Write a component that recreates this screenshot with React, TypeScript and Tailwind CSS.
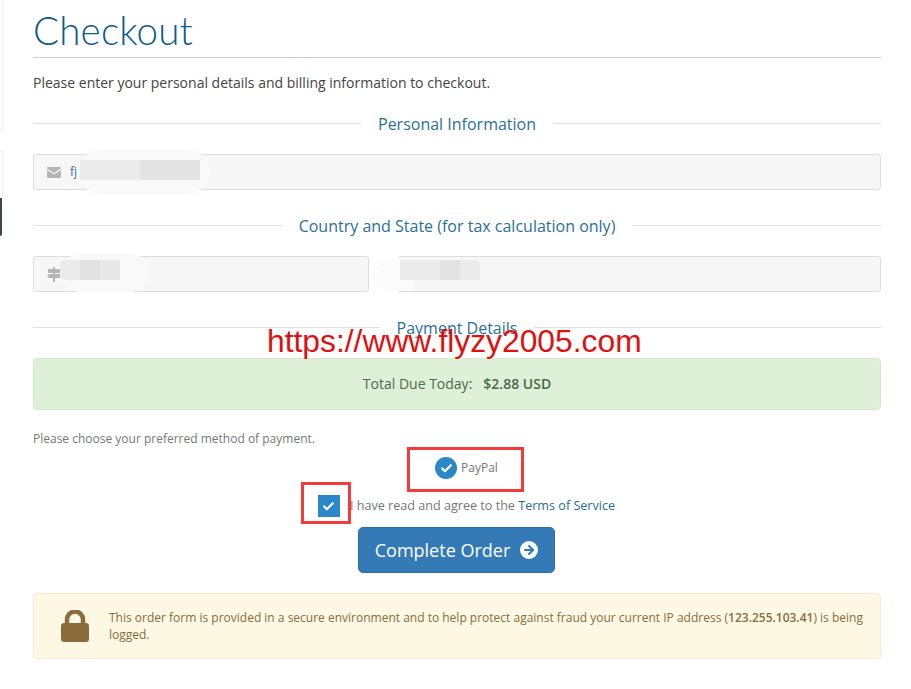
import { Check, ArrowRight } from "lucide-react";

function SubHeading({ title }: { title: string }) {
  return (
    <div className="flex h-5 items-center">
      <div className="mb-[2px] h-px flex-1 bg-[#e0e0e0]" />
      <h2 className="px-[17px] text-[16px] leading-5 text-[#2a6f97]">{title}</h2>
      <div className="mb-[2px] h-px flex-1 bg-[#e0e0e0]" />
    </div>
  );
}

function Field({ className, children }: { className: string; children?: React.ReactNode }) {
  return (
    <div className={`flex h-9 items-center rounded-[3px] border border-[#dddddd] bg-[#f7f7f7] pl-[13px] ${className}`}>
      {children}
    </div>
  );
}

function Patch({ className }: { className: string }) {
  return <div className={`absolute ${className}`} />;
}

function EnvelopeIcon() {
  return (
    <svg width="14" height="11" viewBox="0 0 14 11" className="shrink-0">
      <path d="M0 1.2C0 .5.5 0 1.2 0h11.6C13.5 0 14 .5 14 1.2v.3L7 6 0 1.5z" fill="#b5b5b5" />
      <path d="M0 3l7 4.5L14 3v6.8c0 .7-.5 1.2-1.2 1.2H1.2C.5 11 0 10.500 0 9.800z" fill="#b5b5b5" />
    </svg>
  );
}

function SignsIcon() {
  return (
    <svg width="14" height="15" viewBox="0 0 14 15" className="shrink-0">
      <path d="M6 0h2v15H6z" fill="#b5b5b5" />
      <path d="M1 2h11l2 2-2 2H1z" fill="#b5b5b5" />
      <path d="M2 7h11v4H2L0 9z" fill="#b5b5b5" />
    </svg>
  );
}

function PadlockIcon() {
  return (
    <svg width="28" height="32" viewBox="0 0 28 32" className="shrink-0">
      <path d="M6 14V9.500a8 8 0 0 1 16 0V14" fill="none" stroke="#8a6d3b" strokeWidth="4.500" />
      <rect x="0" y="13" width="28" height="19" rx="3" fill="#8a6d3b" />
    </svg>
  );
}

export default function App() {
  return (
    <div className="relative h-[689px] w-[911px] overflow-hidden bg-white font-['Open_Sans',sans-serif] text-[#58595b]">
      {/* sidebar edge from the page behind */}
      <Patch className="left-0 top-0 h-[131px] w-[3px] rounded-br-[3px] border-r border-b border-[#eeeeee]" />
      <Patch className="left-0 top-[151px] h-[47px] w-[3px] border-r border-t border-[#eeeeee]" />
      <Patch className="left-0 top-[198px] h-[38px] w-[2px] rounded-br-[2px] bg-[#3f4548]" />

      <main className="ml-[33px] w-[848px]">
        <h1 className="h-[58px] border-b border-[#cccccc] pt-[7px] font-['Lato',sans-serif] text-[38.500px] font-light leading-[46px] tracking-[0.2px] text-[#0d5c8c]">
          Checkout
        </h1>
        <p className="mt-[15px] text-[14px] leading-5 text-[#444444]">
          Please enter your personal details and billing information to checkout.
        </p>

        <div className="mt-[21px]">
          <SubHeading title="Personal Information" />
        </div>
        <Field className="mt-5 w-full">
          <EnvelopeIcon />
          <span className="ml-[9px] text-[12px] text-[#336fb5]">fj</span>
        </Field>

        <div className="mt-[26px]">
          <SubHeading title="Country and State (for tax calculation only)" />
        </div>
        <div className="mt-5 flex gap-[3px]">
          <Field className="w-[336px]">
            <SignsIcon />
          </Field>
          <Field className="flex-1" />
        </div>

        <div className="mt-[26px]">
          <SubHeading title="Payment Details" />
        </div>

        <div className="mt-5 flex h-[52px] items-center justify-center rounded-[4px] border border-[#d6e9c6] bg-[#dff0d8] pb-[2px] text-[14px] text-[#4a6b4a]">
          <span>Total Due Today:</span>
          <strong className="ml-[11px] font-semibold">$2.88 USD</strong>
        </div>

        <p className="mt-[21px] text-[12px] leading-4 text-[#777777]">
          Please choose your preferred method of payment.
        </p>

        <div className="mt-[10px] flex h-[22px] items-center justify-center gap-[4px] pl-[19px]">
          <span className="flex h-[22px] w-[22px] items-center justify-center rounded-full bg-[#2a88c8]">
            <Check size={13} strokeWidth={4} className="text-white" />
          </span>
          <span className="text-[12px] text-[#777777]">PayPal</span>
        </div>

        <div className="mt-[16px] flex h-[22px] items-center justify-center pl-[19px]">
          <span className="flex h-[22px] w-[22px] items-center justify-center bg-[#2a88c8]">
            <Check size={13} strokeWidth={4} className="text-white" />
          </span>
          <span className="ml-[10px] text-[12.600px] text-[#777777]">
            I have read and agree to the <a className="text-[#1f6f91]">Terms of Service</a>
          </span>
        </div>

        <div className="mt-[10px] flex justify-center pr-[1px]">
          <button className="flex h-[46px] w-[197px] items-center justify-center gap-[10px] rounded-[5px] border border-[#2e6da4] bg-[#337ab7] text-[18px] text-white">
            Complete Order
            <span className="flex h-[18px] w-[18px] items-center justify-center rounded-full bg-white">
              <ArrowRight size={14} strokeWidth={3.5} className="text-[#337ab7]" />
            </span>
          </button>
        </div>

        <div className="mt-5 flex h-[66px] items-center rounded-[4px] border border-[#faebcc] bg-[#fcf8e3] pl-[27px] pr-[16px] text-[12px] leading-[17px] text-[#8a6d3b]">
          <PadlockIcon />
          <p className="ml-[20px]">
            This order form is provided in a secure environment and to help protect against fraud your current IP address (
            <strong className="font-semibold">123.255.103.41</strong>) is being logged.
          </p>
        </div>
      </main>

      {/* blurred-out personal details */}
      <Patch className="left-[78px] top-[150px] h-[44px] w-[132px] rounded-full bg-[#f9f9f9]" />
      <Patch className="left-[80px] top-[160px] h-[20px] w-[60px] bg-[#ebebeb]" />
      <Patch className="left-[140px] top-[160px] h-[20px] w-[60px] bg-[#e3e3e3]" />
      <Patch className="left-[60px] top-[254px] h-[38px] w-[90px] rounded-full bg-[#f9f9f9]" />
      <Patch className="left-[60px] top-[260px] h-[20px] w-[20px] rounded-l-[5px] bg-[#ebebeb]" />
      <Patch className="left-[80px] top-[260px] h-[20px] w-[20px] bg-[#e2e2e2]" />
      <Patch className="left-[100px] top-[260px] h-[20px] w-[20px] bg-[#e8e8e8]" />
      <Patch className="left-[370px] top-[254px] h-[40px] w-[29px] bg-white" />
      <Patch className="left-[373px] top-[260px] h-[30px] w-[40px] rounded-l-full bg-[#fbfbfb]" />
      <Patch className="left-[400px] top-[260px] h-[20px] w-[40px] bg-[#ebebeb]" />
      <Patch className="left-[440px] top-[260px] h-[20px] w-[20px] bg-[#e3e3e3]" />
      <Patch className="left-[460px] top-[260px] h-[20px] w-[20px] rounded-tr-[6px] bg-[#ebebeb]" />

      {/* annotations added over the screenshot */}
      <div className="absolute left-[267px] top-[322px] font-['Liberation_Sans',sans-serif] text-[31.800px] leading-[38px] text-[#e01010]">
        https://www.flyzy2005.com
      </div>
      <Patch className="left-[407px] top-[447px] h-[45px] w-[117px] border-[3px] border-[#f33b3b]" />
      <Patch className="left-[301px] top-[482px] h-[42px] w-[50px] border-[3px] border-[#f33b3b]" />
    </div>
  );
}
